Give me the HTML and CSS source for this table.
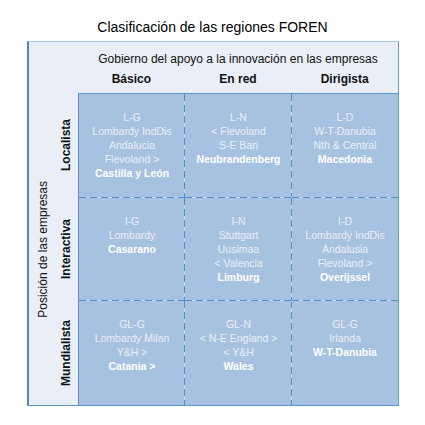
FILE: index.html
```html
<!DOCTYPE html>
<html>
<head>
  <meta charset="utf-8">
  <title>Clasificación de las regiones FOREN</title>
  <link rel="stylesheet" href="styles.css">
</head>
<body>
  <h1 class="title">Clasificación de las regiones FOREN</h1>
  <div class="chart">
    <div class="corner"></div>
    <div class="head">
      <p class="axis-x">Gobierno del apoyo a la innovación en las empresas</p>
      <div class="cols">
        <span>Básico</span>
        <span>En red</span>
        <span>Dirigista</span>
      </div>
    </div>
    <div class="side">
      <div class="axis-y"><span>Posición de las empresas</span></div>
      <div class="rows">
        <span>Localista</span>
        <span>Interactiva</span>
        <span>Mundialista</span>
      </div>
    </div>
    <div class="grid">
      <div class="cell r c">
        <p>L-G</p><p>Lombardy IndDis</p><p>Andalucia</p><p>Flevoland &gt;</p><p class="b">Castilla y León</p>
      </div>
      <div class="cell r c">
        <p>L-N</p><p>&lt; Flevoland</p><p>S-E Bari</p><p class="b">Neubrandenberg</p>
      </div>
      <div class="cell r">
        <p>L-D</p><p>W-T-Danubia</p><p>Nth &amp; Central</p><p class="b">Macedonia</p>
      </div>
      <div class="cell r c">
        <p>I-G</p><p>Lombardy</p><p class="b">Casarano</p>
      </div>
      <div class="cell r c">
        <p>I-N</p><p>Stuttgart</p><p>Uusimaa</p><p>&lt; Valencia</p><p class="b">Limburg</p>
      </div>
      <div class="cell r">
        <p>I-D</p><p>Lombardy IndDis</p><p>Andalusia</p><p>Flevoland &gt;</p><p class="b">Overijssel</p>
      </div>
      <div class="cell c">
        <p>GL-G</p><p>Lombardy Milan</p><p>Y&amp;H &gt;</p><p class="b">Catania &gt;</p>
      </div>
      <div class="cell c">
        <p>GL-N</p><p>&lt; N-E England &gt;</p><p>&lt; Y&amp;H</p><p class="b">Wales</p>
      </div>
      <div class="cell">
        <p>GL-G</p><p>Irlanda</p><p class="b">W-T-Danubia</p>
      </div>
    </div>
  </div>
</body>
</html>
```

FILE: styles.css
```css
body {
  margin: 0;
  background: #ffffff;
  font-family: "Liberation Sans", Arial, sans-serif;
  color: #111111;
}

.title {
  margin: 0;
  padding-top: 18px;
  height: 23px;
  width: 425px;
  text-align: center;
  font-size: 14px;
  font-weight: normal;
  line-height: 18px;
  color: #000000;
}

.chart {
  margin-left: 27px;
  width: 369px;
  height: 363px;
  background: #eaeff7;
  border-top: 1px solid #a7c6e5;
  border-left: 2px solid #4b8bc1;
  border-right: 1px solid #6a9fd0;
  border-bottom: 1px solid #5b93c8;
  display: grid;
  grid-template-columns: 49px 1fr;
  grid-template-rows: 51px 1fr;
}

.head {
  display: flex;
  flex-direction: column;
  font-size: 12px;
}

.axis-x {
  margin: 0;
  padding-top: 10px;
  height: 14px;
  line-height: 14px;
  text-align: center;
}

.cols {
  display: grid;
  grid-template-columns: repeat(3, 1fr);
  padding-top: 6px;
  line-height: 14px;
  font-weight: bold;
  text-align: center;
}

.side {
  display: flex;
  font-size: 12px;
}

.axis-y {
  width: 28px;
  display: flex;
  align-items: center;
  justify-content: center;
}

.axis-y span {
  writing-mode: vertical-rl;
  transform: rotate(180deg);
  white-space: nowrap;
}

.rows {
  flex: 1;
  display: grid;
  grid-template-rows: repeat(3, 1fr);
  font-weight: bold;
}

.rows span {
  writing-mode: vertical-rl;
  transform: rotate(180deg);
  display: flex;
  align-items: center;
  justify-content: center;
  padding-left: 4px;
}

.grid {
  display: grid;
  grid-template-columns: 106px 107px 1fr;
  grid-template-rows: 104px 103px 1fr;
  background: #a7c2e0;
  border-top: 1px solid #5a93c9;
  border-left: 1px solid #5a93c9;
}

.cell {
  padding-top: 16px;
  text-align: center;
  font-size: 10.5px;
  line-height: 14px;
  color: #eaeff7;
  background-color: #a7c2e0;
  background-repeat: no-repeat;
}

.cell p {
  margin: 0;
}

.cell .b {
  font-weight: bold;
  color: #ffffff;
}

.cell.r {
  background-image: repeating-linear-gradient(to right, #4f8fd0 0 7px, #c6d8ee 7px 11px);
  background-position: left bottom;
  background-size: 100% 1px;
}

.cell.c {
  background-image: repeating-linear-gradient(to bottom, #4f8fd0 0 7px, #c6d8ee 7px 11px);
  background-position: right top;
  background-size: 1px 100%;
}

.cell.r.c {
  background-image: repeating-linear-gradient(to right, #4f8fd0 0 7px, #c6d8ee 7px 11px), repeating-linear-gradient(to bottom, #4f8fd0 0 7px, #c6d8ee 7px 11px);
  background-position: left bottom, right top;
  background-size: 100% 1px, 1px 100%;
}
```
